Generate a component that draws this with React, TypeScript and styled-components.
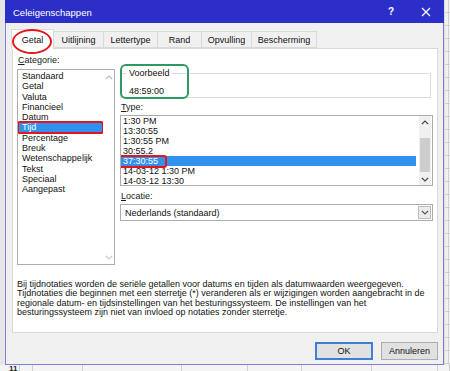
import styled, { createGlobalStyle } from 'styled-components';

const GlobalStyle = createGlobalStyle`
  html, body {
    margin: 0;
    padding: 0;
    background: #f3f3f3;
    font-family: "Liberation Sans", Arial, sans-serif;
    font-size: 9px;
    color: #111;
  }
  * { box-sizing: border-box; }
`;

const categories = [
  'Standaard', 'Getal', 'Valuta', 'Financieel', 'Datum', 'Tijd', 'Percentage',
  'Breuk', 'Wetenschappelijk', 'Tekst', 'Speciaal', 'Aangepast'
];

const types = [
  '1:30 PM', '13:30:55', '1:30:55 PM', '30:55.2', '37:30:55',
  '14-03-12 1:30 PM', '14-03-12 13:30'
];

const tabs = [
  { label: 'Getal', width: 43 },
  { label: 'Uitlijning', width: 51 },
  { label: 'Lettertype', width: 55 },
  { label: 'Rand', width: 45 },
  { label: 'Opvulling', width: 51 },
  { label: 'Bescherming', width: 66 }
];

const bottomCells = [20, 13, 50, 99, 66, 54, 70, 66, 12];

const Chevron = ({ up, color = '#555' }: { up?: boolean; color?: string }) => (
  <svg width="8" height="5" viewBox="0 0 8 5">
    <path
      d={up ? 'M0.8 4.2 L4 1 L7.2 4.2' : 'M0.8 0.8 L4 4 L7.2 0.8'}
      fill="none"
      stroke={color}
      strokeWidth="1.2"
    />
  </svg>
);

const App = () => {
  return (
    <>
      <GlobalStyle />
      <Screen>
        <TopRow>
          <Gutter />
          <Dialog>
            <TitleBar>
              <Title>Celeigenschappen</Title>
              <TitleButtons>
                <Help>?</Help>
                <svg width="10" height="10" viewBox="0 0 10 10">
                  <path d="M1 1 L9 9 M9 1 L1 9" stroke="#fff" strokeWidth="1.2" />
                </svg>
              </TitleButtons>
            </TitleBar>

            <Tabs>
              {tabs.map((t, i) => (
                <Tab key={t.label} $active={i === 0} $width={t.width}>
                  {t.label}
                </Tab>
              ))}
            </Tabs>

            <Panel>
              <Columns>
                <LeftColumn>
                  <Label><u>C</u>ategorie:</Label>
                  <CategoryList>
                    <Items>
                      {categories.map((c) => (
                        <CategoryItem key={c} $selected={c === 'Tijd'}>
                          {c}
                        </CategoryItem>
                      ))}
                    </Items>
                    <ArrowColumn>
                      <Chevron up color="#b9b9b9" />
                      <Chevron color="#c6c6c6" />
                    </ArrowColumn>
                  </CategoryList>
                </LeftColumn>

                <RightColumn>
                  <PreviewBox>
                    <Legend>Voorbeeld</Legend>
                    <PreviewValue>48:59:00</PreviewValue>
                  </PreviewBox>

                  <Label $top={4}><u>T</u>ype:</Label>
                  <TypeList>
                    <Items>
                      {types.map((t) => (
                        <TypeItem key={t} $selected={t === '37:30:55'}>
                          {t}
                        </TypeItem>
                      ))}
                    </Items>
                    <ScrollBar>
                      <ArrowCell><Chevron up color="#444" /></ArrowCell>
                      <Track>
                        <Thumb />
                      </Track>
                      <ArrowCell><Chevron color="#444" /></ArrowCell>
                    </ScrollBar>
                  </TypeList>

                  <Label $top={5}><u>L</u>ocatie:</Label>
                  <Select>
                    <SelectText>Nederlands (standaard)</SelectText>
                    <SelectButton>
                      <Chevron color="#555" />
                    </SelectButton>
                  </Select>
                </RightColumn>
              </Columns>

              <Description>
                Bij tijdnotaties worden de seriële getallen voor datums en tijden als datumwaarden weergegeven.
                Tijdnotaties die beginnen met een sterretje (*) veranderen als er wijzigingen worden aangebracht in
                de regionale datum- en tijdsinstellingen van het besturingssysteem. De instellingen van het
                besturingssysteem zijn niet van invloed op notaties zonder sterretje.
              </Description>
            </Panel>

            <Footer>
              <Button $default>OK</Button>
              <Button>Annuleren</Button>
            </Footer>
          </Dialog>
          <RightStrip />
        </TopRow>
        <BottomStrip>
          {bottomCells.map((w, i) => (
            <Cell key={i} $width={w}>{i === 0 ? '11' : ''}</Cell>
          ))}
        </BottomStrip>
      </Screen>
    </>
  );
};

const Screen = styled.div`
  width: 450px;
  height: 371px;
  overflow: hidden;
  display: flex;
  flex-direction: column;
`;

const TopRow = styled.div`
  display: flex;
  height: 365px;
`;

const Gutter = styled.div`
  width: 5px;
  background: #e6e6e6;
`;

const RightStrip = styled.div`
  flex: 1;
  background:
    repeating-linear-gradient(to bottom, transparent 0 12px, #d4d4d4 12px 13px),
    #f1f1f1;
  border-left: 1px solid #dadada;
  position: relative;

  &::after {
    content: '';
    position: absolute;
    top: 0;
    bottom: 0;
    left: 3px;
    width: 1px;
    background: #cfcfcf;
  }
`;

const Dialog = styled.div`
  width: 439px;
  height: 365px;
  background: #f0f0f0;
  border: 1px solid #7d7ddb;
  border-top: none;
  display: flex;
  flex-direction: column;
`;

const TitleBar = styled.div`
  height: 23px;
  margin: 0 -1px;
  background: #2b2fc8;
  color: #fff;
  display: flex;
  align-items: center;
  justify-content: space-between;
  padding: 0 13px 0 8px;
`;

const Title = styled.span`
  font-size: 9.5px;
  margin-top: 1px;
`;

const TitleButtons = styled.div`
  display: flex;
  align-items: center;
  gap: 27px;
`;

const Help = styled.span`
  font-size: 10px;
  font-weight: bold;
`;

const Tabs = styled.div`
  display: flex;
  align-items: flex-end;
  padding-left: 5px;
  margin-top: 6px;
  height: 19px;
  position: relative;
  z-index: 1;
`;

const Tab = styled.div<{ $active?: boolean; $width: number }>`
  width: ${({ $width }) => $width}px;
  height: ${({ $active }) => ($active ? 20 : 17)}px;
  margin-bottom: ${({ $active }) => ($active ? -1 : 0)}px;
  margin-right: -1px;
  background: ${({ $active }) => ($active ? '#fff' : '#f0f0f0')};
  border: 1px solid #d9d9d9;
  border-bottom: ${({ $active }) => ($active ? 'none' : '1px solid #d9d9d9')};
  display: flex;
  align-items: center;
  justify-content: center;
  position: relative;

  ${({ $active }) =>
    $active &&
    `
    &::after {
      content: '';
      position: absolute;
      left: 0;
      top: -1px;
      width: 36px;
      height: 21px;
      border: 2px solid #e3151d;
      border-radius: 50%;
    }
  `}
`;

const Panel = styled.div`
  margin-left: 6px;
  width: 426px;
  height: 285px;
  background: #fff;
  border: 1px solid #d9d9d9;
  padding: 6px 4px 0 4px;
  display: flex;
  flex-direction: column;
`;

const Columns = styled.div`
  display: flex;
  gap: 5px;
`;

const LeftColumn = styled.div`
  width: 98px;
  display: flex;
  flex-direction: column;
`;

const RightColumn = styled.div`
  flex: 1;
  display: flex;
  flex-direction: column;
`;

const Label = styled.div<{ $top?: number }>`
  line-height: 11px;
  margin-top: ${({ $top }) => $top ?? 0}px;
  margin-bottom: 2px;
  margin-left: 1px;
  color: #1a1a1a;

  u {
    text-decoration: underline;
  }
`;

const CategoryList = styled.div`
  height: 196px;
  border: 1px solid #adadad;
  display: flex;
  margin-top: 1px;
`;

const Items = styled.div`
  flex: 1;
  display: flex;
  flex-direction: column;
  overflow: hidden;
`;

const CategoryItem = styled.div<{ $selected?: boolean }>`
  line-height: 10.3px;
  height: 10.3px;
  padding-left: 4px;
  white-space: nowrap;
  position: relative;
  background: ${({ $selected }) => ($selected ? '#3391ee' : 'transparent')};
  color: ${({ $selected }) => ($selected ? '#fff' : '#111')};

  &:first-child {
    margin-top: 1px;
  }

  ${({ $selected }) =>
    $selected &&
    `
    &::after {
      content: '';
      position: absolute;
      left: -1px;
      right: -1px;
      top: -1.5px;
      bottom: -1.5px;
      border: 2px solid #e3151d;
      border-radius: 3px;
    }
  `}
`;

const ArrowColumn = styled.div`
  width: 11px;
  display: flex;
  flex-direction: column;
  justify-content: space-between;
  align-items: center;
  padding: 5px 0 4px;
`;

const PreviewBox = styled.div`
  margin-top: 18px;
  width: 311px;
  height: 25px;
  border: 1px solid #dcdcdc;
  position: relative;

  &::after {
    content: '';
    position: absolute;
    left: -1px;
    top: -10px;
    width: 65px;
    height: 31px;
    border: 2px solid #2e9a60;
    border-radius: 6px;
  }
`;

const Legend = styled.div`
  display: inline-block;
  margin: -6px 0 0 6px;
  padding: 0 2px;
  line-height: 11px;
  background: #fff;
  vertical-align: top;
`;

const PreviewValue = styled.div`
  line-height: 11px;
  margin-top: 2px;
  padding-left: 8px;
`;

const TypeList = styled.div`
  height: 71px;
  border: 1px solid #adadad;
  display: flex;
`;

const TypeItem = styled.div<{ $selected?: boolean }>`
  line-height: 10px;
  height: 10px;
  padding-left: 2px;
  margin-right: 3px;
  white-space: nowrap;
  position: relative;
  background: ${({ $selected }) => ($selected ? '#3391ee' : 'transparent')};
  color: ${({ $selected }) => ($selected ? '#fff' : '#111')};

  ${({ $selected }) =>
    $selected &&
    `
    &::after {
      content: '';
      position: absolute;
      left: -3px;
      width: 45px;
      top: -1.5px;
      bottom: -1.5px;
      border: 2px solid #e3151d;
      border-radius: 3px;
    }
  `}
`;

const ScrollBar = styled.div`
  width: 12px;
  margin-right: 1px;
  display: flex;
  flex-direction: column;
  background: #f0f0f0;
`;

const ArrowCell = styled.div`
  height: 12px;
  display: flex;
  align-items: center;
  justify-content: center;
`;

const Track = styled.div`
  flex: 1;
  display: flex;
  flex-direction: column;
  justify-content: flex-end;
  padding: 0 1px 0;
`;

const Thumb = styled.div`
  height: 34px;
  margin-bottom: 1px;
  background: #cdcdcd;
`;

const Select = styled.div`
  height: 17px;
  border: 1px solid #adadad;
  display: flex;
  align-items: center;
`;

const SelectText = styled.span`
  flex: 1;
  padding-left: 4px;
`;

const SelectButton = styled.div`
  width: 13px;
  height: 13px;
  margin-right: 1px;
  border: 1px solid #bcbcbc;
  background: #ececec;
  display: flex;
  align-items: center;
  justify-content: center;
`;

const Description = styled.p`
  margin: 15px 0 0 0;
  line-height: 9.4px;
  width: 410px;
  color: #111;
`;

const Footer = styled.div`
  display: flex;
  justify-content: flex-end;
  gap: 8px;
  padding: 9px 5px 0 0;
`;

const Button = styled.button<{ $default?: boolean }>`
  width: ${({ $default }) => ($default ? 58 : 57)}px;
  height: 18px;
  padding: 0;
  font-family: "Liberation Sans", Arial, sans-serif;
  font-size: 9px;
  color: #111;
  background: #e1e1e1;
  border: ${({ $default }) => ($default ? '2px solid #3c7fd4' : '1px solid #adadad')};
`;

const BottomStrip = styled.div`
  flex: 1;
  display: flex;
  background: #f4f4f4;
`;

const Cell = styled.div<{ $width: number }>`
  width: ${({ $width }) => $width}px;
  border-right: 1px solid #cfcfcf;
  font-size: 8px;
  font-weight: bold;
  line-height: 8px;
  padding-left: 9px;
  color: #222;
`;

export default App;
